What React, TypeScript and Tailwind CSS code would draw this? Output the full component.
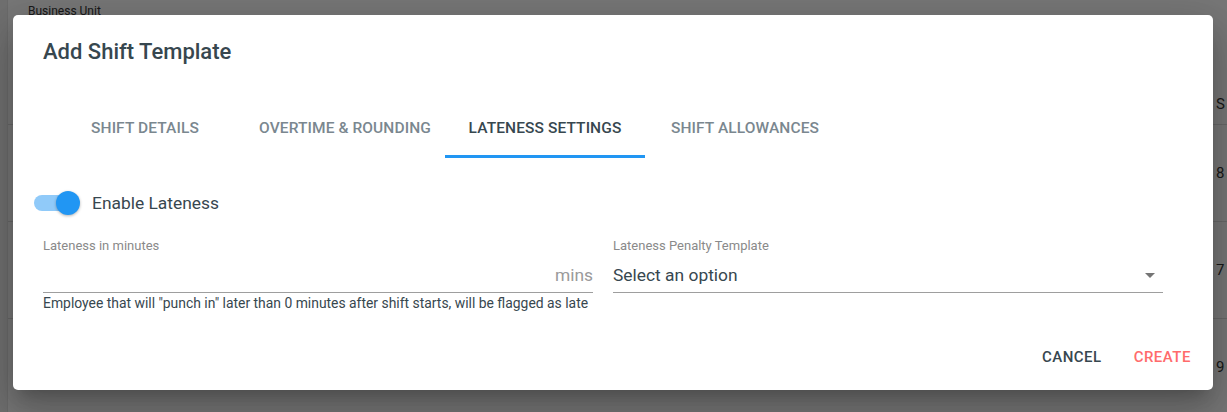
import React from 'react';

// ── Background page (dimmed behind the dialog) ────────────────────────────────

function BackgroundPage() {
  const rows = ['8', '7', '9'];
  return (
    <div className="flex h-[412px] w-full overflow-hidden bg-[#eeeeee] text-[#333]">
      <div className="w-[8px] shrink-0 border-r border-[#d6d6d6] bg-[#e0e0e0]" />
      <div className="flex min-w-0 flex-1 flex-col">
        <div className="flex h-[125px] shrink-0 border-b border-[#d0d0d0]">
          <div className="flex-1 pl-5 pt-[2px] text-[12px]">Business Unit</div>
          <div className="flex w-[11px] flex-col justify-end pb-[9px] text-[15px]">S</div>
        </div>
        {rows.map((n, i) => (
          <div key={n} className="flex h-[97px] shrink-0 border-b border-[#d0d0d0]">
            <div className="flex flex-1 items-end pl-[28px]">
              {i === 2 && <div className="mb-[-29px] h-[24px] w-[24px] rounded-full bg-[#d81b60]" />}
            </div>
            <div className="flex w-[11px] items-center text-[15px]">{n}</div>
          </div>
        ))}
      </div>
    </div>
  );
}

// ── Toggle ────────────────────────────────────────────────────────────────────

function Toggle() {
  return (
    <div className="relative h-[24px] w-[46px] shrink-0">
      <div className="absolute left-0 top-[4px] h-[16px] w-[44px] rounded-full bg-[#90caf9]" />
      <div className="absolute right-0 top-0 h-[24px] w-[24px] rounded-full bg-[#2196f3] shadow-[0_1px_3px_rgba(0,0,0,0.3)]" />
    </div>
  );
}

// ── Dialog ────────────────────────────────────────────────────────────────────

const tabs = ['Shift Details', 'Overtime & Rounding', 'Lateness Settings', 'Shift Allowances'];

function Dialog() {
  return (
    <div className="absolute left-[13px] top-[15px] flex h-[375px] w-[1200px] flex-col rounded-[5px] bg-white px-[30px] shadow-[0_11px_15px_-7px_rgba(0,0,0,0.2),0_24px_38px_3px_rgba(0,0,0,0.14),0_9px_46px_8px_rgba(0,0,0,0.12)]">
      <h2 className="mt-[21px] h-[32px] text-[22px] font-medium leading-[32px] text-[#37474f]">
        Add Shift Template
      </h2>

      {/* Tabs */}
      <div className="ml-[2px] mt-[30px] flex h-[60px]">
        {tabs.map((t, i) => (
          <div
            key={t}
            className={`flex w-[200px] flex-col items-center justify-center border-b-[3px] pt-[4px] text-[15.5px] font-medium uppercase tracking-[0.1px] ${
              i === 2 ? 'border-[#2196f3] text-[#37474f]' : 'border-transparent text-[#7a878f]'
            }`}
          >
            {t}
          </div>
        ))}
      </div>

      {/* Enable toggle */}
      <div className="ml-[-9px] mt-[33px] flex h-[24px] items-center gap-[12px]">
        <Toggle />
        <span className="text-[17.4px] text-[#37474f]">Enable Lateness</span>
      </div>

      {/* Fields */}
      <div className="mt-[23px] flex gap-[20px]">
        <div className="flex w-[550px] flex-col">
          <label className="h-[16px] text-[13px] leading-[16px] text-[#8a8a8a]">Lateness in minutes</label>
          <div className="mt-[6px] flex h-[33px] items-center justify-end border-b border-[#9e9e9e] pb-[2px]">
            <span className="text-[17.4px] text-[#9a9a9a]">mins</span>
          </div>
          <p className="mt-[1px] text-[13.9px] leading-[18px] text-[#37474f]">
            Employee that will "punch in" later than 0 minutes after shift starts, will be flagged as late
          </p>
        </div>
        <div className="flex w-[550px] flex-col">
          <label className="h-[16px] text-[13px] leading-[16px] text-[#8a8a8a]">Lateness Penalty Template</label>
          <div className="mt-[6px] flex h-[33px] items-center justify-between border-b border-[#9e9e9e] pb-[2px]">
            <span className="text-[17.4px] text-[#37474f]">Select an option</span>
            <svg width="10" height="5" viewBox="0 0 10 5" className="mr-[8px]" aria-hidden="true">
              <path d="M0 0h10L5 5z" fill="#757575" />
            </svg>
          </div>
        </div>
      </div>

      {/* Actions */}
      <div className="mt-auto mb-[22px] mr-[-8px] flex justify-end gap-[32px]">
        <button className="text-[15px] font-medium uppercase tracking-[0.5px] text-[#37474f]">Cancel</button>
        <button className="text-[15px] font-medium uppercase tracking-[0.5px] text-[#ff6b6b]">Create</button>
      </div>
    </div>
  );
}

export default function App() {
  return (
    <div className="relative h-[412px] w-full overflow-hidden font-['Roboto',sans-serif]">
      <BackgroundPage />
      <div className="absolute inset-0 bg-black/50" />
      <Dialog />
    </div>
  );
}
